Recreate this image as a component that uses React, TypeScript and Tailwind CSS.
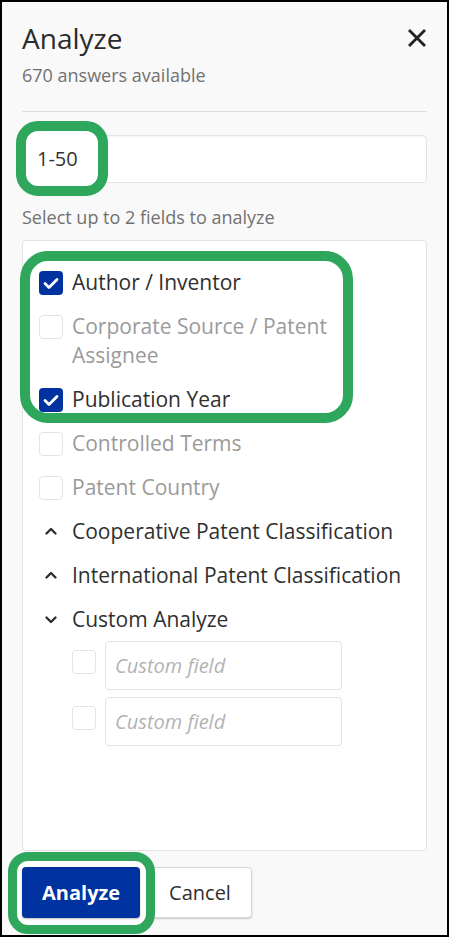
import React from "react";

function CheckBox({ checked }: { checked?: boolean }) {
  if (checked) {
    return (
      <div className="w-[24px] h-[24px] shrink-0 rounded-[4px] bg-[#0033a0] flex items-center justify-center">
        <svg width="24" height="24" viewBox="0 0 24 24" className="block">
          <polyline points="6,12.5 10,16.5 18,8.5" fill="none" stroke="#ffffff" strokeWidth="2.8" strokeLinecap="round" strokeLinejoin="round" />
        </svg>
      </div>
    );
  }
  return <div className="w-[24px] h-[24px] shrink-0 rounded-[4px] bg-white border border-[#e3e3e3]" />;
}

function Chevron({ up }: { up?: boolean }) {
  return (
    <svg width="24" height="29" viewBox="0 0 24 29" className="block shrink-0">
      <polyline
        points={up ? "7.5,16.5 12,12 16.5,16.5" : "7.5,12.5 12,17 16.5,12.5"}
        fill="none"
        stroke="#2f2f2f"
        strokeWidth="2.4"
        strokeLinecap="round"
        strokeLinejoin="round"
      />
    </svg>
  );
}

function Item({ label, checked, disabled }: { label: React.ReactNode; checked?: boolean; disabled?: boolean }) {
  return (
    <div className="relative z-20 flex items-start gap-[9px]">
      <div className="flex shrink-0 pt-[2.5px] leading-none">
        <CheckBox checked={checked} />
      </div>
      <span className={disabled ? "text-[#9a9a9a]" : "text-[#2f2f2f]"}>{label}</span>
    </div>
  );
}

function Group({ label, up }: { label: string; up?: boolean }) {
  return (
    <div className="flex items-start gap-[9px]">
      <Chevron up={up} />
      <span className="text-[#2f2f2f]">{label}</span>
    </div>
  );
}

function CustomField() {
  return (
    <div className="flex items-start gap-[9px] ml-[33px]">
      <div className="flex shrink-0 pt-[9px] leading-none">
        <CheckBox />
      </div>
      <div className="w-[237px] h-[49px] bg-white border border-[#e3e3e3] rounded-[4px] flex items-center pl-[9px] italic text-[20px] text-[#b3b3b3]">
        Custom field
      </div>
    </div>
  );
}

export default function App() {
  return (
    <div className="relative w-[449px] h-[937px] border-2 border-black bg-[#f9f9f9] flex flex-col px-5 pt-[17px] pb-[17px] font-['Open_Sans',sans-serif] text-[#2f2f2f]">
      {/* header */}
      <div className="flex items-start justify-between">
        <h1 className="text-[28px] leading-[38px] font-medium text-[#2b2b2b]">Analyze</h1>
        <button className="h-[38px] flex items-center" aria-label="Close">
          <svg width="20" height="20" viewBox="0 0 20 20" className="block">
            <line x1="2" y1="2" x2="18" y2="18" stroke="#222222" strokeWidth="2.8" />
            <line x1="18" y1="2" x2="2" y2="18" stroke="#222222" strokeWidth="2.8" />
          </svg>
        </button>
      </div>
      <div className="mt-[5px] text-[18px] leading-[26px] text-[#717171]">670 answers available</div>

      <div className="mt-[23px] h-px bg-[#dedede]" />

      <div className="mt-[23px] h-[48px] bg-white border border-[#e3e3e3] rounded-[4px] flex items-center pl-[14px] shadow-[inset_0_1px_2px_rgba(0,0,0,0.05)]">
        <span className="relative z-20 text-[20px] text-[#333333]">1-50</span>
      </div>

      <div className="mt-[21px] text-[18px] leading-[26px] text-[#717171]">Select up to 2 fields to analyze</div>

      <div className="mt-[10px] flex-1 bg-white border border-[#e3e3e3] rounded-[4px] pt-[27px] pl-[16px] pr-4 flex flex-col gap-[15px] text-[21px] leading-[29px]">
        <Item label="Author / Inventor" checked />
        <Item label={<>Corporate Source / Patent<br />Assignee</>} disabled />
        <Item label="Publication Year" checked />
        <Item label="Controlled Terms" disabled />
        <Item label="Patent Country" disabled />
        <Group label="Cooperative Patent Classification" up />
        <Group label="International Patent Classification" up />
        <div className="flex flex-col gap-[7px]">
          <Group label="Custom Analyze" />
          <div className="flex flex-col gap-[7px]">
            <CustomField />
            <CustomField />
          </div>
        </div>
      </div>

      <div className="mt-4 flex gap-2 h-[51px]">
        <button className="relative z-20 h-[51px] px-5 rounded-[4px] bg-[#0033a0] text-white text-[20px] font-bold shadow-[0_1px_2px_rgba(0,0,0,0.25)]">
          Analyze
        </button>
        <button className="h-[51px] px-5 rounded-[4px] bg-white border border-[#d8d8d8] text-[#2f2f2f] text-[20px] shadow-[0_1px_2px_rgba(0,0,0,0.2)]">
          Cancel
        </button>
      </div>

      {/* annotation highlight rings */}
      <div className="absolute z-10 left-[14px] top-[119px] w-[92px] h-[75px] rounded-[22px] border-[10px] border-[#2ea65c] bg-white" />
      <div className="absolute z-10 left-[18px] top-[249px] w-[333px] h-[172px] rounded-[28px] border-[10px] border-[#2ea65c] bg-white" />
      <div className="absolute z-10 left-[6px] top-[850px] w-[147px] h-[82px] rounded-[20px] border-[9px] border-[#2ea65c] bg-white" />
    </div>
  );
}
